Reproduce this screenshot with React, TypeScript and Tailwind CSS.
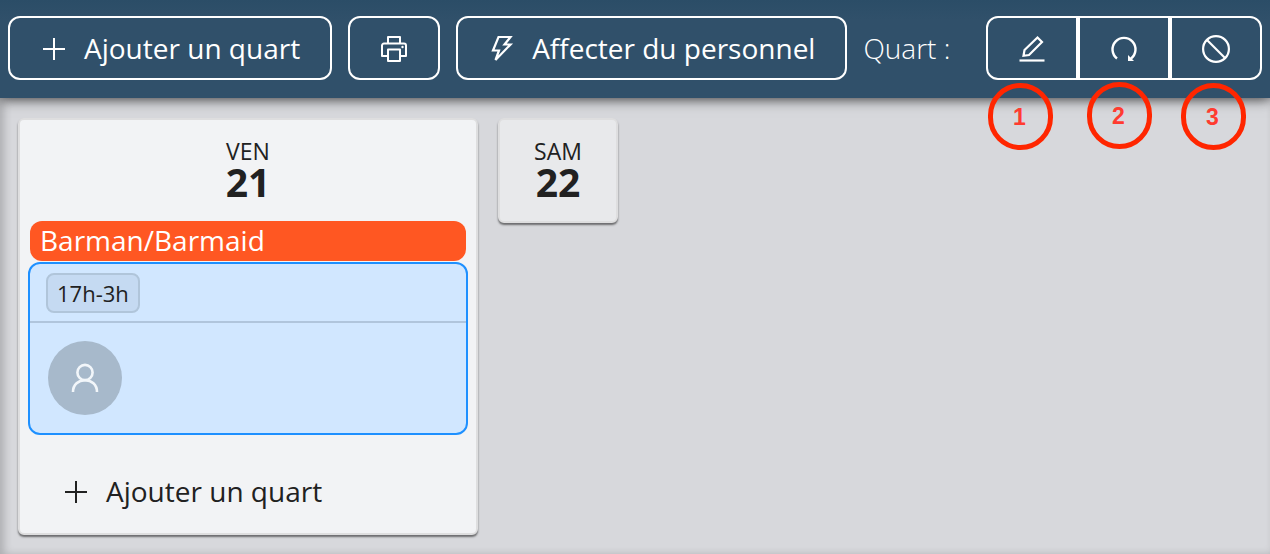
import React from "react";

function PlusIcon() {
  return (
    <svg width="24" height="24" viewBox="0 0 24 24" fill="none" stroke="currentColor" strokeWidth="2" aria-hidden="true">
      <path d="M12 2v22M1 13h22" />
    </svg>
  );
}

function PrinterIcon() {
  return (
    <svg width="28" height="30" viewBox="0 0 28 30" fill="none" stroke="currentColor" strokeWidth="2" strokeLinejoin="round" aria-hidden="true">
      <path d="M8 10.500V4h12v6.500" />
      <path d="M7.500 23H2V12.500a2 2 0 0 1 2-2h20a2 2 0 0 1 2 2V23h-5.500" />
      <path d="M8 16.500h12V28H8z" />
      <circle cx="22.500" cy="14" r="1.200" fill="currentColor" stroke="none" />
    </svg>
  );
}

function BoltIcon() {
  return (
    <svg width="24" height="30" viewBox="0 0 24 30" fill="none" stroke="currentColor" strokeWidth="2.200" aria-hidden="true">
      <path d="M8.500 4H20.500L14.500 11.500H20.500L5.500 27L9 17.500H3Z" />
    </svg>
  );
}

function PencilIcon() {
  return (
    <svg width="28" height="30" viewBox="0 0 28 30" fill="none" stroke="currentColor" strokeWidth="2.200" aria-hidden="true">
      <path d="M5.500 22.800L6.500 17L19.500 4.500L24 9L11 22Z" />
      <path d="M1.500 27.500H26.500" />
    </svg>
  );
}

function RedoIcon() {
  return (
    <svg width="28" height="30" viewBox="0 0 28 30" fill="none" stroke="currentColor" strokeWidth="2.400" aria-hidden="true">
      <path d="M7 25.500A11.500 11.500 0 1 1 21 25.500" />
      <path d="M18 22V28H24Z" fill="currentColor" stroke="none" />
    </svg>
  );
}

function BanIcon() {
  return (
    <svg width="28" height="30" viewBox="0 0 28 30" fill="none" stroke="currentColor" strokeWidth="2.200" aria-hidden="true">
      <circle cx="14" cy="16" r="12.900" />
      <path d="M5 7L23 25" />
    </svg>
  );
}

function PersonIcon() {
  return (
    <svg width="28" height="30" viewBox="0 0 28 30" fill="none" stroke="currentColor" strokeWidth="2.600" aria-hidden="true">
      <circle cx="14" cy="9.500" r="7.600" />
      <path d="M2 29C2 21.500 7.500 17.200 14 17.200S26 21.500 26 29" />
    </svg>
  );
}

const outlined = "flex h-16 shrink-0 items-center rounded-xl border-2 border-white";

function Callout({ n, className }: { n: number; className: string }) {
  return (
    <span
      className={`pointer-events-none absolute z-10 flex h-[67px] w-[65px] items-center justify-center rounded-full border-5 border-[#ff2600] pt-0.5 pr-0.5 font-['Liberation_Sans',sans-serif] text-[23px] font-bold text-[#ff3b30] ${className}`}
    >
      {n}
    </span>
  );
}

function DayHeading({ day, date }: { day: string; date: number }) {
  return (
    <h2 className="flex flex-col items-center text-[#212121]">
      <span className="text-[23px] leading-7 font-normal">{day}</span>
      <span className="text-[39px] leading-[34px] font-bold">{date}</span>
    </h2>
  );
}

export default function App() {
  return (
    <div className="flex min-h-screen flex-col bg-[#d7d8dc] font-['Open_Sans','Noto_Sans',sans-serif]">
      <header className="relative z-10 flex items-center gap-4 bg-[#30506a] bg-linear-to-b from-[#2b4d67] to-[#30506a] to-20% px-2 pt-4 pb-[18px] text-[28px] text-white shadow-[0_2px_12px_rgba(0,0,0,0.6)]">
        <button type="button" className={`${outlined} gap-[18px] pr-[30px] pl-8 font-medium`}>
          <PlusIcon />
          Ajouter un quart
        </button>
        <button type="button" aria-label="Imprimer" className={`${outlined} w-[92px] justify-center`}>
          <PrinterIcon />
        </button>
        <button type="button" className={`${outlined} gap-[18px] pr-[30px] pl-8 font-medium`}>
          <BoltIcon />
          Affecter du personnel
        </button>
        <span className="font-light whitespace-nowrap">Quart :</span>
        <div className="relative ml-auto flex">
          <button type="button" aria-label="Modifier" className="flex h-16 w-[92px] items-center justify-center rounded-l-xl border-2 border-white">
            <PencilIcon />
          </button>
          <button type="button" aria-label="Rétablir" className="flex h-16 w-[92px] items-center justify-center border-2 border-white">
            <RedoIcon />
          </button>
          <button type="button" aria-label="Annuler" className="flex h-16 w-[92px] items-center justify-center rounded-r-xl border-2 border-white">
            <BanIcon />
          </button>
          <Callout n={1} className="top-[67px] left-[2px]" />
          <Callout n={2} className="top-[66px] left-[101px]" />
          <Callout n={3} className="top-[67px] left-[195px]" />
        </div>
      </header>

      <main className="flex grow items-start gap-5 px-[18px] py-5 shadow-[inset_4px_0_8px_rgba(0,0,0,0.2)]">
        <section className="w-[460px] rounded-md border-2 border-[#dededf] bg-[#f2f3f5] px-2 pt-[17px] pb-2.5 shadow-[0_2px_2px_rgba(0,0,0,0.5)]">
          <DayHeading day="VEN" date={21} />
          <h3 className="mx-0.5 mt-[22px] rounded-xl bg-[#ff5722] px-2.5 pb-0.5 text-[28px] leading-[38px] text-white">Barman/Barmaid</h3>
          <article className="mt-px rounded-xl border-2 border-[#1e90ff] bg-[#d1e7ff]">
            <div className="border-b-2 border-[#b0c5dc] px-4 pt-[9px] pb-2">
              <span className="inline-block rounded-lg border-2 border-[#b0c5da] bg-[#c5daf2] px-[9px] align-top text-[22px] leading-9 text-[#212121]">17h-3h</span>
            </div>
            <div className="px-[18px] py-[18px]">
              <span className="flex size-[74px] items-center justify-center rounded-full bg-[#a7b9cb] text-[#f2f6fa]">
                <PersonIcon />
              </span>
            </div>
          </article>
          <button type="button" className="mt-6 flex h-16 items-center gap-[18px] px-9 text-[28px] text-[#212121]">
            <PlusIcon />
            Ajouter un quart
          </button>
        </section>

        <section className="w-[120px] rounded-md border-2 border-[#dededf] bg-[#e8e9eb] pt-[17px] pb-[22px] shadow-[0_2px_2px_rgba(0,0,0,0.5)]">
          <DayHeading day="SAM" date={22} />
        </section>
      </main>
    </div>
  );
}
